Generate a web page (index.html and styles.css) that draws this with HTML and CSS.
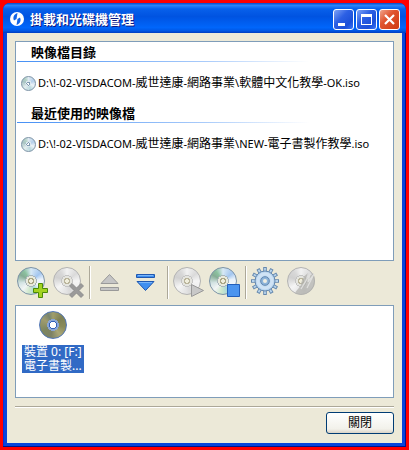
FILE: index.html
```html
<!DOCTYPE html>
<html lang="zh-Hant">
<head>
  <meta charset="UTF-8" />
  <meta name="viewport" content="width=device-width, initial-scale=1.0"/>
  <title>掛載和光碟機管理</title>
  <link rel="stylesheet" href="styles.css">
</head>
<body>

  <div class="window">
    <header class="titlebar">
      <svg class="logo" viewBox="0 0 14 14">
        <circle cx="7" cy="7" r="7" fill="#fff"/>
        <path d="M7.500 1C4 2 2.500 5.500 4 8.500L6.500 7zM6.500 13c3.500-1 5-4.500 3.500-7.500L7.500 7z" fill="#1264e8"/>
      </svg>
      <h1>掛載和光碟機管理</h1>
      <div class="window-buttons">
        <button type="button" aria-label="Minimize">
          <svg viewBox="0 0 19 19"><path d="M4 13h7v3H4z" fill="#fff"/></svg>
        </button>
        <button type="button" aria-label="Maximize">
          <svg viewBox="0 0 19 19"><path d="M4 4h11v11H4zM5 7v7h9V7z" fill="#fff" fill-rule="evenodd"/></svg>
        </button>
        <button type="button" class="close" aria-label="Close">
          <svg viewBox="0 0 19 19"><path d="m5 5 9 9M14 5l-9 9" stroke="#fff" stroke-width="2.2"/></svg>
        </button>
      </div>
    </header>

    <main class="content">
      <section class="panel images">
        <h2>映像檔目錄</h2>
        <p class="image-file"><span class="disc small"></span><span>D:\!-02-VISDACOM-<span class="han">威世達康</span>-<span class="han">網路事業</span>\<span class="han">軟體中文化教學</span>-OK.iso</span></p>
        <h2>最近使用的映像檔</h2>
        <p class="image-file"><span class="disc small"></span><span>D:\!-02-VISDACOM-<span class="han">威世達康</span>-<span class="han">網路事業</span>\NEW-<span class="han">電子書製作教學</span>.iso</span></p>
      </section>

      <div class="toolbar">
        <button type="button" aria-label="Add image">
          <span class="disc"></span>
          <svg viewBox="0 0 36 34"><path d="M23.5 18.5h4v5h5v4h-5v5h-4v-5h-5v-4h5z" fill="#a4d321" stroke="#4c8a08"/></svg>
        </button>
        <button type="button" aria-label="Remove image">
          <span class="disc gray"></span>
          <svg viewBox="0 0 36 34"><path d="m21 18.500 4.500 4.500 4.500-4.500 2.500 2.500-4.500 4.500 4.500 4.500-2.500 2.500-4.500-4.500-4.500 4.500-2.500-2.500 4.500-4.500-4.500-4.500z" fill="#9a9a9a" stroke="#858585" stroke-width=".8"/></svg>
        </button>
        <span class="divider"></span>
        <button type="button" aria-label="Unmount">
          <svg viewBox="0 0 36 34"><path d="m16.500 9.500 8.500 9H8zM7.500 22.500h18v3h-18z" fill="#c5c5c5" stroke="#999"/></svg>
        </button>
        <button type="button" aria-label="Mount">
          <svg viewBox="0 0 36 34">
            <path d="M7.500 9.500h18v3h-18zM8 16.500h17l-8.500 9z" fill="#3f8ff0" stroke="#2058b0"/>
            <path d="M9 10.500h15M10 17.500h13" stroke="#79b5fa"/>
          </svg>
        </button>
        <span class="divider"></span>
        <button type="button" aria-label="Add drive">
          <span class="disc gray"></span>
          <svg viewBox="0 0 36 34"><path d="M20.500 19.500v12l12-6z" fill="#c8c8c8" stroke="#999"/></svg>
        </button>
        <button type="button" aria-label="Stop drive">
          <span class="disc"></span>
          <svg viewBox="0 0 36 34"><path d="M20.500 19.500h12v12h-12z" fill="#4c95ef" stroke="#235fba"/></svg>
        </button>
        <span class="divider"></span>
        <button type="button" aria-label="Preferences">
          <svg viewBox="0 0 36 34">
            <g stroke="#6588ae" stroke-width="3.600">
              <path d="M16 2v28M2 16h28M9 3.900l14 24.200M3.900 9l24.200 14M23 3.900 9 28.100M28.100 9 3.900 23"/>
            </g>
            <path d="M16 3v26M3 16h26M9.500 4.700l13 22.600M4.700 9.500l22.600 13M22.500 4.700l-13 22.600M27.300 9.500l-22.600 13" stroke="#b7d3ec" stroke-width="1.800"/>
            <circle cx="16" cy="16" r="10" fill="#b9d5ee" stroke="#6588ae"/>
            <circle cx="16" cy="16" r="7" fill="none" stroke="#d0e3f5" stroke-width="3"/>
            <circle cx="16" cy="16" r="4.300" fill="#8fb5da" stroke="#6488b0"/>
            <circle cx="16" cy="16" r="2" fill="#f0eee2"/>
          </svg>
        </button>
        <button type="button" aria-label="Burn disc">
          <span class="disc gray"></span>
          <svg viewBox="0 0 36 34">
            <path d="M28 8c-2 3-5 3-7 6 1-3 1-4 2-6-5 4-6 7-7 11 0 3-3 4-6 9 9 5 20-2 20-12 0-3-1-6-2-8z" fill="#b1b1ae" opacity=".75"/>
            <path d="m16 24 9-15-2 8 6-8-7 14" fill="none" stroke="#e0e0de" stroke-width="1.200"/>
          </svg>
        </button>
      </div>

      <section class="panel devices">
        <button type="button" class="device">
          <span class="disc gold"></span>
          <span class="device-name">裝置 0: [F:]<br>電子書製...</span>
        </button>
      </section>

      <footer class="footer">
        <button type="button" class="close-button">關閉</button>
      </footer>
    </main>
  </div>

</body>
</html>
```

FILE: styles.css
```css
* {
  box-sizing: border-box;
}

body {
  margin: 0;
  padding: 3px;
  min-height: 100vh;
  display: flex;
  background-color: #f00;
  color: #000;
  font-family: "Noto Sans", "Noto Sans CJK TC", sans-serif;
  font-size: 12px;
  line-height: 14px;
}

h1, h2, p {
  margin: 0;
}

button {
  padding: 0;
  border: 0;
  background: none;
  color: inherit;
  font: inherit;
}

svg {
  display: block;
}

.window {
  flex: 1;
  min-width: 0;
  display: flex;
  flex-direction: column;
  padding: 0 4px 4px;
  border-radius: 7px 7px 0 0;
  background-color: #0845dc;
  box-shadow: inset -1px -1px #00138c, inset 1px 0 #0831d9;
}

.titlebar {
  display: flex;
  align-items: center;
  gap: 6px;
  height: 30px;
  margin: 0 -4px;
  padding: 2px 6px 0 7px;
  border-radius: 7px 7px 0 0;
  background: linear-gradient(#0848c8, #2b84f8 8%, #0860ea 20%, #0053e1 45%, #0066fb 82%, #0058e6 92%, #003dc0);
}

.logo {
  width: 14px;
  height: 14px;
}

.titlebar h1 {
  flex: 1;
  color: #fff;
  font-size: 13px;
  font-weight: bold;
  line-height: 16px;
  text-shadow: 1px 1px #0a1883;
}

.window-buttons {
  display: flex;
  gap: 2px;
}

.window-buttons button {
  width: 21px;
  height: 21px;
  border: 1px solid #fff;
  border-radius: 3px;
  background: linear-gradient(135deg, #7fa3f5, #2c60e4 40%, #1c50d8 75%, #3975f8);
}

.window-buttons .close {
  background: linear-gradient(135deg, #f0a48c, #e0542f 40%, #cf3a12);
}

.content {
  flex: 1;
  display: flex;
  flex-direction: column;
  padding: 8px 8px 9px;
  background-color: #ece9d8;
}

.panel {
  border: 1px solid #7f9db9;
  background-color: #fff;
}

.images {
  flex: 1;
  padding: 3px 1px;
}

.images h2 {
  height: 17px;
  padding-left: 14px;
  background: linear-gradient(to right, #4690f5, #a9cbfa 50%, #fff 78%) bottom / 100% 1px no-repeat;
  font-size: 13px;
  line-height: 15px;
}

.image-file {
  display: flex;
  align-items: center;
  gap: 2px;
  height: 44px;
  padding: 0 0 2px 4px;
  font-size: 11px;
  white-space: nowrap;
}

.han {
  font-size: 12px;
}

/* optical discs */

.disc {
  flex: none;
  display: block;
  width: 28px;
  height: 28px;
  border: 1px solid #7c93a6;
  border-radius: 50%;
  background:
    radial-gradient(circle, #f0eedc 0 2px, #aaa684 2px 3px, #e8eadc 3px 5px, #a9b5ba 5px 6px, transparent 6px),
    conic-gradient(#d8e9f5, #a3c6ef 50deg, #e9f2fb 80deg, #f5f8f9 120deg, #a8d7d9 155deg, #cfe8cb 190deg, #f2f5f5 225deg, #d3e3e3 260deg, #85ac94 300deg, #8bc19f 325deg, #d8e9f5);
}

.disc.gray {
  border-color: #b3b3b3;
  background:
    radial-gradient(circle, #f0eedc 0 2px, #b9b49b 2px 3px, #e5e5df 3px 5px, #c4c4c4 5px 6px, transparent 6px),
    conic-gradient(#f2f2f2, #dadada 50deg, #f5f5f5 90deg, #f0f0f0 120deg, #d8d8d8 160deg, #e5e5e5 190deg, #f5f5f5 235deg, #d0d0d0 290deg, #d8d8d8 325deg, #f2f2f2);
}

.disc.gold {
  border-color: #5176b5;
  background:
    radial-gradient(circle, #fff 0 3px, #315fbc 3px 4px, #8aa6d4 4px 6px, transparent 6px),
    conic-gradient(#a09e6b, #7d8055 50deg, #8a8b5b 100deg, #aaa777 145deg, #7d8265 190deg, #7d8660 240deg, #a09c6e 300deg, #788570 335deg, #a09e6b);
}

.disc.small {
  width: 15px;
  height: 15px;
  background:
    radial-gradient(circle, #fff 0 1px, #809bb0 1px 2px, #dce8ef 2px 3px, transparent 3px),
    conic-gradient(#dfeaf3, #b4cfea 60deg, #eef4f8 110deg, #bad9df 160deg, #e3eeee 225deg, #a8c4c3 290deg, #b5d3c6 325deg, #dfeaf3);
}

.toolbar {
  display: flex;
  align-items: center;
  height: 44px;
  padding-bottom: 2px;
}

.toolbar button {
  display: grid;
  width: 36px;
  height: 34px;
}

.toolbar button > * {
  grid-area: 1 / 1;
}

.toolbar .disc {
  margin: 2px;
}

.divider {
  width: 2px;
  height: 33px;
  margin: 0 2px;
  border-left: 1px solid #aca899;
  border-right: 1px solid #fff;
}

.devices {
  min-height: 93px;
  padding: 5px 6px;
}

.device {
  display: flex;
  flex-direction: column;
  align-items: center;
  gap: 6px;
}

.device-name {
  padding: 0 2px;
  background-color: #316ac5;
  color: #fff;
}

.footer {
  display: flex;
  justify-content: flex-end;
  margin-top: 8px;
  padding-top: 5px;
  border-top: 1px solid #aca899;
  box-shadow: inset 0 1px #fff;
}

.close-button {
  width: 68px;
  height: 22px;
  border: 1px solid #003c74;
  border-radius: 3px;
  background: linear-gradient(#fff, #f2f1ea 80%, #d9d3c7);
}
```
